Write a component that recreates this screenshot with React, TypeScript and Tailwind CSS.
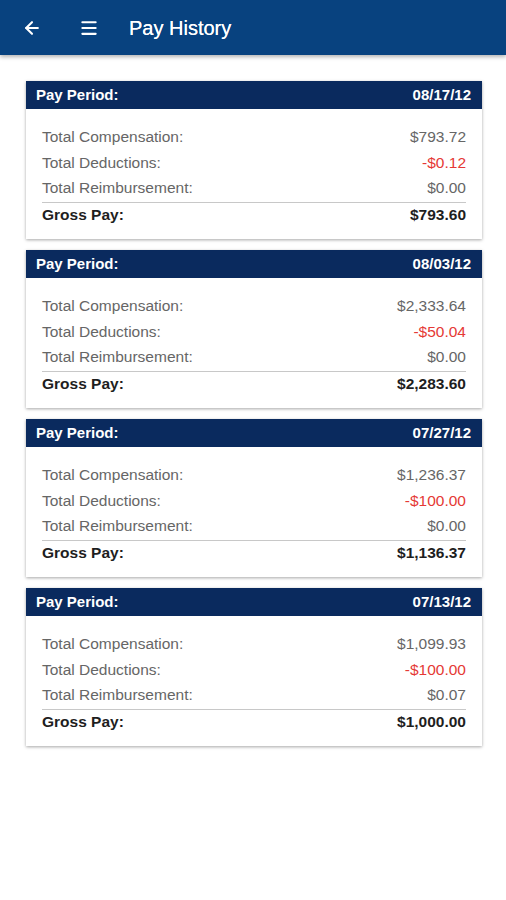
import { ArrowLeft, Menu } from 'lucide-react'

interface Period {
  date: string
  comp: string
  ded: string
  reimb: string
  gross: string
}

const PERIODS: Period[] = [
  { date: '08/17/12', comp: '$793.72', ded: '-$0.12', reimb: '$0.00', gross: '$793.60' },
  { date: '08/03/12', comp: '$2,333.64', ded: '-$50.04', reimb: '$0.00', gross: '$2,283.60' },
  { date: '07/27/12', comp: '$1,236.37', ded: '-$100.00', reimb: '$0.00', gross: '$1,136.37' },
  { date: '07/13/12', comp: '$1,099.93', ded: '-$100.00', reimb: '$0.07', gross: '$1,000.00' },
]

function Row({ label, value, red }: { label: string; value: string; red?: boolean }) {
  return (
    <div className="flex items-center justify-between h-[25.5px]">
      <span className="text-[#666666]">{label}</span>
      <span className={red ? 'text-[#e53935]' : 'text-[#666666]'}>{value}</span>
    </div>
  )
}

export default function App() {
  return (
    <div className="w-[506px] h-[900px] bg-white [font-family:'Liberation_Sans',Arial,sans-serif]">
      <header className="h-[55px] bg-[#08427f] flex items-center shadow-[0_2px_4px_rgba(0,0,0,0.3)]">
        <ArrowLeft className="ml-[22px] text-white" size={20} strokeWidth={2.5} />
        <Menu className="ml-[37px] text-white" size={20} strokeWidth={2.5} />
        <h1 className="ml-[30px] text-white text-[20px] [text-shadow:0_0_0.4px_white]">Pay History</h1>
      </header>

      <div className="pl-[26px] pr-[24px] pt-[26px] flex flex-col gap-[11px]">
        {PERIODS.map(p => (
          <div key={p.date} className="bg-white shadow-[0_1px_3px_rgba(0,0,0,0.35)]">
            <div className="h-[28px] bg-[#0a2a5e] flex items-center justify-between pl-[10px] pr-[11px] text-white text-[15px] font-bold">
              <span>Pay Period:</span>
              <span>{p.date}</span>
            </div>
            <div className="pl-[16px] pr-[16px] pt-[15px] pb-[12.5px] text-[15.5px]">
              <Row label="Total Compensation:" value={p.comp} />
              <Row label="Total Deductions:" value={p.ded} red />
              <Row label="Total Reimbursement:" value={p.reimb} />
              <div className="h-px bg-[#c8c8c8] mt-[1px]" />
              <div className="flex items-center justify-between h-[24px] font-bold text-[#1e1e1e] text-[15.5px]">
                <span>Gross Pay:</span>
                <span>{p.gross}</span>
              </div>
            </div>
          </div>
        ))}
      </div>
    </div>
  )
}
